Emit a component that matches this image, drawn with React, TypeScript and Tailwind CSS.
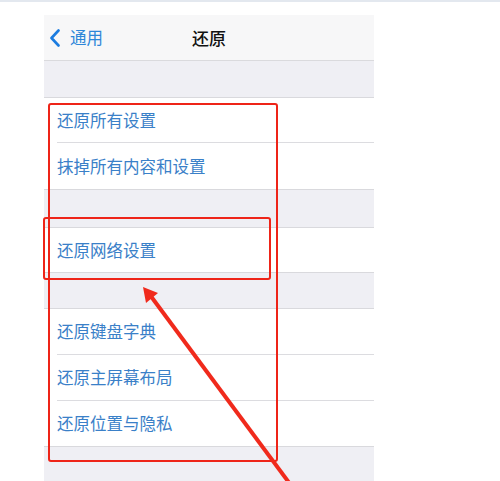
import React from 'react';

const font = { fontFamily: '"Noto Sans CJK SC", "Noto Sans", sans-serif' };

function Row({ label, h, last }: { label: string; h: string; last?: boolean }) {
  return (
    <div className="bg-white pl-[13px]">
      <div className={`${h} flex items-center text-[16.5px] text-[#3a80c8] ${last ? '' : 'border-b border-[#dcdce0]'}`}>
        {label}
      </div>
    </div>
  );
}

export default function App() {
  return (
    <div className="relative w-[500px] h-[481px] bg-white overflow-hidden" style={font}>
      <div className="h-[2px] bg-[#e3e8ef]" />
      <div className="ml-[44px] mt-[13px] w-[330px]">
        {/* nav bar */}
        <div className="relative h-[46px] bg-[#f7f7f8] border-b border-[#dadadd] flex items-center">
          <div className="flex items-center pl-[5px] gap-[9px]">
            <svg width="12" height="18" viewBox="0 0 12 18">
              <path d="M9.5 1.5 L2.5 9 L9.5 16.5" fill="none" stroke="#1b7ce0" strokeWidth="2.6" strokeLinecap="round" strokeLinejoin="round" />
            </svg>
            <span className="text-[16.5px] text-[#2d86d8]">通用</span>
          </div>
          <span className="absolute left-1/2 -translate-x-1/2 text-[17px] font-medium text-[#111]">还原</span>
        </div>
        <div className="h-[37px] bg-[#efeff4] border-b border-[#d9d9dd]" />
        <Row label="还原所有设置" h="h-[45px]" />
        <Row label="抹掉所有内容和设置" h="h-[46px]" last />
        <div className="h-[39px] bg-[#efeff4] border-y border-[#d9d9dd]" />
        <Row label="还原网络设置" h="h-[44px]" last />
        <div className="h-[37px] bg-[#efeff4] border-y border-[#d9d9dd]" />
        <Row label="还原键盘字典" h="h-[46px]" />
        <Row label="还原主屏幕布局" h="h-[46px]" />
        <Row label="还原位置与隐私" h="h-[45px]" last />
        <div className="h-[40px] bg-[#efeff4] border-t border-[#d9d9dd]" />
      </div>

      {/* annotations */}
      <div className="absolute left-[48px] top-[103px] w-[230px] h-[359px] border-2 border-[#ee2418] rounded-[3px]" />
      <div className="absolute left-[43px] top-[217px] w-[228px] h-[63px] border-2 border-[#ee2418] rounded-[3px]" />
      <svg className="absolute left-0 top-0" width="500" height="481" viewBox="0 0 500 481">
        <line x1="150" y1="295" x2="290" y2="484" stroke="#f02a1c" strokeWidth="4" />
        <polygon points="143,287 158,293 146,303" fill="#f02a1c" />
      </svg>
    </div>
  );
}
